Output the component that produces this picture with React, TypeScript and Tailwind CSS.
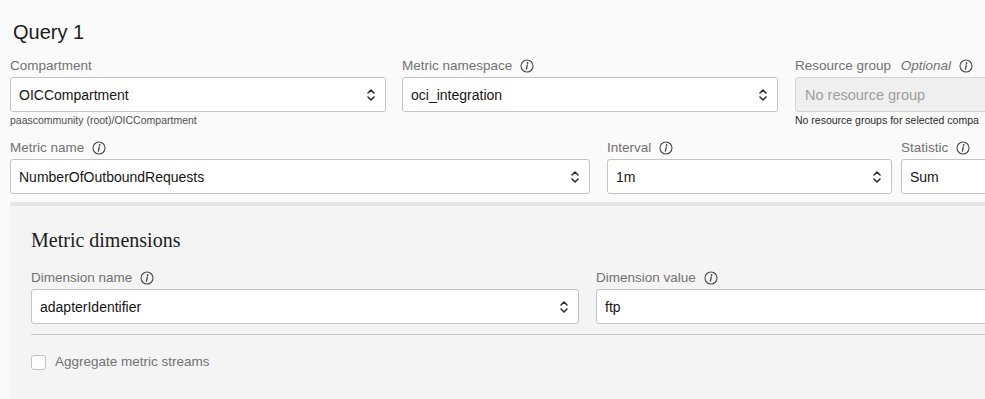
import type { ReactNode } from "react";

function InfoIcon() {
  return (
    <svg width="14" height="14" viewBox="0 0 14 14" className="shrink-0">
      <circle cx="7" cy="7" r="6" fill="none" stroke="#4a4a4a" strokeWidth="1.1" />
      <circle cx="7.6" cy="4" r="0.9" fill="#4a4a4a" />
      <path d="M7.3 6 L6.4 10.2" stroke="#4a4a4a" strokeWidth="1.3" strokeLinecap="round" />
    </svg>
  );
}

function Chevrons() {
  return (
    <svg width="10" height="16" viewBox="0 0 10 16" className="shrink-0">
      <path d="M2 6 L5 3 L8 6" fill="none" stroke="#2b2b2b" strokeWidth="1.5" strokeLinecap="round" strokeLinejoin="round" />
      <path d="M2 10 L5 13 L8 10" fill="none" stroke="#2b2b2b" strokeWidth="1.5" strokeLinecap="round" strokeLinejoin="round" />
    </svg>
  );
}

function Label({ children, info = true }: { children: ReactNode; info?: boolean }) {
  return (
    <div className="flex h-4 items-center gap-2 text-[13.5px] leading-4 text-[#727272] whitespace-nowrap">
      <span>{children}</span>
      {info && <InfoIcon />}
    </div>
  );
}

function Select({ value, arrow = true }: { value: string; arrow?: boolean }) {
  return (
    <div className="mt-[3px] flex h-[35px] items-center justify-between rounded-[3px] border border-[#c4c4c4] bg-white pl-[8px] pr-[9px] text-[14px] text-[#161513]">
      <span className="pt-[2px] whitespace-nowrap">{value}</span>
      {arrow && <Chevrons />}
    </div>
  );
}

export default function App() {
  return (
    <div className="h-[399px] w-[985px] overflow-hidden bg-[#fafafa] font-['Liberation_Sans',Arial,sans-serif]">
      <div className="pl-[10px] pt-[20px]">
        <h2 className="pl-[3px] text-[20px] leading-6 text-[#1c1c1c]">Query 1</h2>

        <div className="mt-[14px] flex">
          <div className="w-[376px] shrink-0">
            <Label info={false}>Compartment</Label>
            <Select value="OICCompartment" />
            <p className="mt-[1px] text-[10.5px] leading-[14px] text-[#4f4f4f]">paascommunity (root)/OICCompartment</p>
          </div>
          <div className="ml-[16px] w-[376px] shrink-0">
            <Label>Metric namespace</Label>
            <Select value="oci_integration" />
          </div>
          <div className="ml-[17px] w-[376px] shrink-0">
            <Label>
              Resource group <i className="ml-[6px]">Optional</i>
            </Label>
            <div className="mt-[3px] flex h-[35px] items-center rounded-[3px] border border-[#d4d4d4] bg-[#efefef] pl-[9px] pt-[2px] text-[14.5px] text-[#9d9d9d] whitespace-nowrap">
              No resource group
            </div>
            <p className="mt-[1px] text-[10.5px] leading-[14px] text-[#2b2b2b] whitespace-nowrap">No resource groups for selected compa</p>
          </div>
        </div>

        <div className="mt-[13px] flex">
          <div className="w-[580px] shrink-0">
            <Label>Metric name</Label>
            <Select value="NumberOfOutboundRequests" />
          </div>
          <div className="ml-[17px] w-[285px] shrink-0">
            <Label>Interval</Label>
            <Select value="1m" />
          </div>
          <div className="ml-[9px] w-[300px] shrink-0">
            <Label>Statistic</Label>
            <Select value="Sum" />
          </div>
        </div>
      </div>

      <div className="ml-[10px] mt-[8px] h-[300px] border-t-4 border-[#e6e6e6] bg-[#f4f4f4] pl-[21px] pt-[22px]">
        <h3 className="font-['Liberation_Serif','Times_New_Roman',serif] text-[20px] leading-6 text-[#1c1c1c]">Metric dimensions</h3>
        <div className="mt-[18px] flex">
          <div className="w-[548px] shrink-0">
            <Label>Dimension name</Label>
            <Select value="adapterIdentifier" />
          </div>
          <div className="ml-[17px] w-[500px] shrink-0">
            <Label>Dimension value</Label>
            <Select value="ftp" arrow={false} />
          </div>
        </div>
        <div className="mt-[10px] h-px bg-[#c9c9c9]" />
        <label className="mt-[17px] flex items-center gap-[9px] text-[13.5px] text-[#727272]">
          <span className="h-[15px] w-[15px] rounded-[3px] border border-[#c2c2c2] bg-white" />
          Aggregate metric streams
        </label>
      </div>
    </div>
  );
}
